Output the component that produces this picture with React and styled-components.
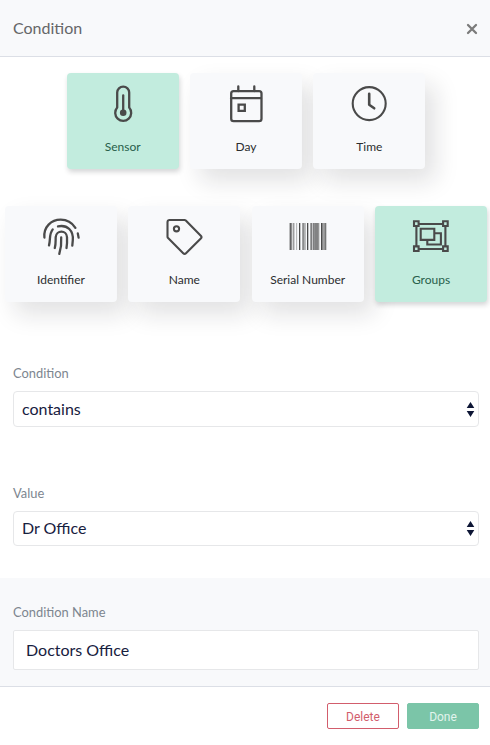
import React from "react";
import styled, { createGlobalStyle, css } from "styled-components";

const GlobalStyle = createGlobalStyle`
  * { box-sizing: border-box; }
  body { margin: 0; background: #fff; overflow: hidden; }
  button, input { font-family: inherit; }
`;

const Dialog = styled.main`
  width: 490px;
  height: 745px;
  display: flex;
  flex-direction: column;
  overflow: hidden;
  background: #fff;
  color: #0d1635;
  font-family: Lato, "Liberation Sans", sans-serif;
`;

const Header = styled.header`
  height: 57px;
  flex: none;
  display: flex;
  align-items: center;
  justify-content: space-between;
  padding: 0 12px 0 13px;
  background: #f8f9fb;
  border-bottom: 1px solid #dcdfe6;
`;

const Title = styled.h1`
  margin: 0;
  font-size: 16px;
  line-height: 20px;
  font-weight: 400;
  color: #656668;
`;

const CloseButton = styled.button`
  display: flex;
  margin-top: 2px;
  padding: 0;
  border: 0;
  background: none;
  color: #7b7b7b;
`;

const CardGroups = styled.section`
  height: 304px;
  flex: none;
  padding: 16px 0 0 2px;
  display: flex;
  flex-direction: column;
  gap: 37px;
`;

const CardRow = styled.div`
  display: flex;
  justify-content: center;
  gap: 11.33px;
`;

const Card = styled.button`
  width: 112px;
  height: 96px;
  flex: none;
  display: flex;
  flex-direction: column;
  align-items: center;
  padding: 10px 0 0;
  border: 0;
  border-radius: 4px;
  background: #f8f9fb;
  color: #2b2d2f;
  box-shadow: 10px 12px 24px rgba(20, 25, 30, 0.13);
  ${({ $selected }) => $selected && css`
    background: #c2ecde;
    color: #28604b;
    box-shadow: 1px 3px 5px rgba(20, 30, 35, 0.18);
  `}
`;

const CardIcon = styled.svg`
  width: 42px;
  height: 42px;
  flex: none;
  fill: none;
  stroke: #4a4a4a;
  stroke-width: 2.3;
  stroke-linecap: round;
  stroke-linejoin: round;
`;

const CardLabel = styled.span`
  margin-top: 14px;
  font-size: 12px;
  line-height: 16px;
`;

const Field = styled.div`
  height: ${({ $height }) => $height}px;
  flex: none;
  padding: 3px 11px 0 13px;
`;

const Label = styled.label`
  display: block;
  font-size: 12.9px;
  line-height: 18px;
  color: #7d868f;
`;

const Select = styled.button`
  width: 100%;
  height: ${({ $height }) => $height}px;
  margin-top: 9px;
  padding: 0 3px 0 8px;
  display: flex;
  align-items: center;
  justify-content: space-between;
  border: 1px solid #e6e7e9;
  border-radius: 4px;
  background: #fff;
  color: #17203e;
  font-size: 16px;
  line-height: 20px;
`;

const SelectValue = styled.span`
  padding-bottom: ${({ $lift }) => $lift || 0}px;
`;

const NameSection = styled.section`
  height: 109px;
  flex: none;
  padding: 25px 11px 0 13px;
  background: #f8f9fb;
  border-bottom: 1px solid #dcdfe6;
`;

const NameInput = styled.input`
  display: block;
  width: 100%;
  height: 40px;
  margin-top: 9px;
  padding: 0 12px 2px;
  border: 1px solid #e6e7e9;
  border-radius: 2px;
  background: #fff;
  color: #17203e;
  font-size: 16px;
  outline: none;
`;

const Footer = styled.footer`
  display: flex;
  justify-content: flex-end;
  gap: 8px;
  padding: 16px 11px 0;
`;

const ActionButton = styled.button`
  width: 72px;
  height: 26px;
  padding: 2px 0 0;
  border: 1px solid ${({ $primary }) => ($primary ? "#7bc5a8" : "#d25d6c")};
  border-radius: 2px;
  background: ${({ $primary }) => ($primary ? "#7bc5a8" : "#fff")};
  color: ${({ $primary }) => ($primary ? "#e2f4ed" : "#d25d6c")};
  font-family: Roboto, sans-serif;
  font-size: 12px;
  line-height: 22px;
`;

const bars = [
  [0, 2, 0.85], [2, 0.8, 0.5], [3.7, 1, 0.75], [6.7, 0.8, 0.5], [9.4, 1.3, 1],
  [12.6, 2.1, 0.62], [14.7, 1.6, 0.38], [17.4, 1.3, 1], [20.7, 2.1, 0.7],
  [23.7, 1.3, 1], [25.4, 3.8, 0.68], [29.2, 0.8, 0.3], [31.4, 1.6, 1],
  [33.2, 1.6, 0.5], [34.8, 1.9, 0.75],
];

const icons = {
  sensor: <><path d="M15.2 24.5V9.6a6 6 0 0 1 12 0v14.9a8 8 0 1 1-12 0Z" /><path d="M21.2 12.5v16" /><circle cx="21.2" cy="29.8" r="3.3" fill="#4a4a4a" stroke="none" /></>,
  day: <><rect x="6.2" y="8.2" width="30.3" height="30" rx="2.4" /><path d="M6 15.2h30M13.3 3.5V8M29.3 3.5V8" /><path d="M13.6 21.7h6.2v6.2h-6.2z" strokeLinejoin="miter" /></>,
  time: <><circle cx="21.2" cy="20.6" r="16.5" strokeWidth="2.1" /><path d="M21.2 10.8v11l5 3.5" strokeWidth="2.6" /></>,
  identifier: <><path d="M4.4 21.5C3.4 11 11.2 3.6 20.7 3.6c6.2 0 11.4 3 14.7 8.2M37.8 17.4l.8 4.2M12.7 13.4C8.8 18.5 10.7 23 9 29.4M18 10.4c9.6-2 15.6 4.4 14.8 13.8L32.3 29.6M14.8 32c1.2-4 .7-7.6.9-10.9.5-7.2 11-7.2 11.3 0 .2 4 .3 7.2-.5 10.9M21.2 21.3c.4 6-.3 11.4-1.9 16.5" /></>,
  name: <g strokeWidth="2.1"><path d="M4.5 6a2 2 0 0 1 2-2H21.4a2 2 0 0 1 1.4.6L37.8 19.8a2 2 0 0 1 0 2.8L23 37.2a2 2 0 0 1-2.8 0L5.1 22.1a2 2 0 0 1-.6-1.4Z" /><circle cx="13.5" cy="12.8" r="2.6" /></g>,
  serial: <g fill="#4a4a4a" stroke="none">{bars.map(([x, w, o]) => <rect key={x} x={x + 2.6} y="7" width={w} height="27" opacity={o} />)}</g>,
  groups: <g strokeLinejoin="miter" strokeLinecap="butt" strokeWidth="2.1"><path d="M9 8h24M9 33h24M6.4 11v19M35.4 11v19" /><path d="M4 5.2h4.6v4.8H4zM33.1 5.2h4.6v4.8h-4.6zM4 30.4h4.6V35H4zM33.1 30.4h4.6V35h-4.6zM10.7 12.8h13.6v11.1H10.7zM24.3 17.2h6.6v11.3H17.3v-4.6" /></g>,
};

const rows = [
  [["sensor", "Sensor", true], ["day", "Day"], ["time", "Time"]],
  [["identifier", "Identifier"], ["name", "Name"], ["serial", "Serial Number"], ["groups", "Groups", true]],
];

function Arrows() {
  return <svg width="9" height="15" viewBox="0 0 9 15" fill="#0d1635"><path d="M4.5 0 8.3 6H.7zM.7 9h7.6l-3.8 6z" /></svg>;
}

export default function App() {
  return (
    <Dialog>
      <GlobalStyle />
      <Header>
        <Title>Condition</Title>
        <CloseButton aria-label="Close">
          <svg width="12" height="12" viewBox="0 0 12 12" fill="none" stroke="currentColor" strokeWidth="2.3" strokeLinecap="round"><path d="m2 2 8 8M10 2l-8 8" /></svg>
        </CloseButton>
      </Header>
      <CardGroups>
        {rows.map((row, index) => (
          <CardRow key={index}>
            {row.map(([icon, label, selected]) => (
              <Card key={icon} $selected={selected}>
                <CardIcon viewBox="0 0 42 42">{icons[icon]}</CardIcon>
                <CardLabel>{label}</CardLabel>
              </Card>
            ))}
          </CardRow>
        ))}
      </CardGroups>
      <Field $height={120}>
        <Label>Condition</Label>
        <Select $height={36}><SelectValue>contains</SelectValue><Arrows /></Select>
      </Field>
      <Field $height={97}>
        <Label>Value</Label>
        <Select $height={35}><SelectValue $lift={2}>Dr Office</SelectValue><Arrows /></Select>
      </Field>
      <NameSection>
        <Label htmlFor="condition-name">Condition Name</Label>
        <NameInput id="condition-name" defaultValue="Doctors Office" />
      </NameSection>
      <Footer>
        <ActionButton>Delete</ActionButton>
        <ActionButton $primary>Done</ActionButton>
      </Footer>
    </Dialog>
  );
}
